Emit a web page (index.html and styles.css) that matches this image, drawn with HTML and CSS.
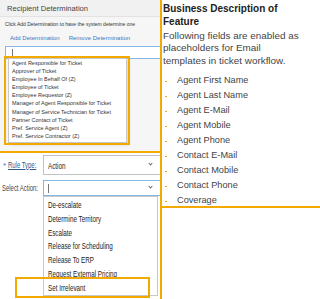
FILE: index.html
```html
<!DOCTYPE html>
<html lang="en">

<head>
  <meta charset="UTF-8" />
  <meta name="viewport" content="width=device-width, initial-scale=1.0" />
  <title>Recipient Determination</title>
  <link rel="stylesheet" href="styles.css">
</head>

<body>
  <div class="shots">
    <div class="shot-column">
      <div class="recipient-shot">
        <div class="panel-header">Recipient Determination</div>
        <p class="hint">Click Add Determination to have the system determine one</p>
        <div class="actions">
          <a href="#">Add Determination</a>
          <a href="#">Remove Determination</a>
        </div>
        <div class="text-input"><span class="caret"></span></div>
        <ul class="menu recipient-menu">
          <li>Agent Responsible for Ticket</li>
          <li>Approver of Ticket</li>
          <li>Employee In Behalf Of (Z)</li>
          <li>Employee of Ticket</li>
          <li>Employee Requestor (Z)</li>
          <li>Manager of Agent Responsible for Ticket</li>
          <li>Manager of Service Technician for Ticket</li>
          <li>Partner Contact of Ticket</li>
          <li>Pref. Service Agent (Z)</li>
          <li>Pref. Service Contractor (Z)</li>
        </ul>
        <div class="highlight recipient-highlight"></div>
      </div>

      <div class="rule-shot">
        <div class="field-row">
          <label class="field-label required"><span class="star">*</span><span class="narrow link-label">Rule Type:</span></label>
          <div class="select-box"><span class="narrow">Action</span><span class="chevron"></span></div>
        </div>
        <div class="field-row">
          <label class="field-label"><span class="narrow">Select Action:</span></label>
          <div class="select-box focused"><span class="caret tall"></span><span class="chevron"></span></div>
        </div>
        <ul class="menu action-menu">
          <li><span class="narrow">De-escalate</span></li>
          <li><span class="narrow">Determine Territory</span></li>
          <li><span class="narrow">Escalate</span></li>
          <li><span class="narrow">Release for Scheduling</span></li>
          <li><span class="narrow">Release To ERP</span></li>
          <li><span class="narrow">Request External Pricing</span></li>
          <li><span class="narrow">Set Irrelevant</span></li>
        </ul>
        <div class="highlight action-highlight"></div>
      </div>
    </div>

    <div class="description">
      <div class="description-body">
        <h2>Business Description of Feature</h2>
        <p>Following fields are enabled as<br>placeholders for Email<br>templates in ticket workflow.</p>
        <ul>
          <li>Agent First Name</li>
          <li>Agent Last Name</li>
          <li>Agent E-Mail</li>
          <li>Agent Mobile</li>
          <li>Agent Phone</li>
          <li>Contact E-Mail</li>
          <li>Contact Mobile</li>
          <li>Contact Phone</li>
          <li>Coverage</li>
        </ul>
      </div>
    </div>
  </div>
</body>

</html>
```

FILE: styles.css
```css
* {
  box-sizing: border-box;
}

body {
  margin: 0;
  font-family: 'Liberation Sans', Arial, sans-serif;
  color: #333;
  background: #fff;
}

.shots {
  display: flex;
  width: 320px;
  height: 299px;
  overflow: hidden;
}

.shot-column {
  width: 160px;
  display: flex;
  flex-direction: column;
}

/* top screenshot: recipient determination */
.recipient-shot {
  position: relative;
  height: 153px;
  background: #f6f6f6;
  border-bottom: 2px solid #f2a900;
  overflow: hidden;
}

.panel-header {
  height: 17px;
  padding: 4px 0 0 7px;
  font-size: 7.6px;
  color: #444;
  background: #f1f1f1;
  border-bottom: 1px solid #e2e2e2;
}

.hint {
  margin: 4px 0 0 5px;
  font-size: 5px;
  white-space: nowrap;
  color: #333;
}

.actions {
  display: flex;
  gap: 9px;
  margin: 8px 0 0 10px;
  font-size: 6px;
}

.actions a {
  color: #3b78c2;
  text-decoration: none;
}

.text-input {
  height: 13px;
  margin: 5px -10px 0 5px;
  background: #fff;
  border: 1px solid #86b6e6;
  padding: 2px 0 0 6px;
}

.caret {
  display: block;
  width: 1px;
  height: 7px;
  background: #777;
}

.menu {
  list-style: none;
  margin: 0;
  padding: 0;
  background: #fff;
  border: 1px solid #c8c8c8;
}

.recipient-menu {
  position: absolute;
  left: 8px;
  top: 58px;
  width: 119px;
  padding: 0 0 2px 3px;
  font-size: 5.5px;
  line-height: 8.1px;
  white-space: nowrap;
  box-shadow: 2px 2px 3px rgba(0, 0, 0, 0.12);
}

.highlight {
  position: absolute;
  border: 2px solid #f2a900;
}

.recipient-highlight {
  left: 4px;
  top: 56px;
  width: 126px;
  height: 89px;
}

/* bottom screenshot: rule type / action */
.rule-shot {
  position: relative;
  flex: 1;
  padding-top: 2px;
  overflow: hidden;
}

.field-row {
  display: flex;
  align-items: center;
  margin-bottom: 5px;
}

.field-label {
  width: 43px;
  padding-left: 2px;
  font-size: 9px;
  color: #444;
  white-space: nowrap;
}

.field-label.required {
  padding-left: 3px;
}

.star {
  color: #2d6fc0;
  font-size: 8px;
  margin-right: 2px;
}

.link-label {
  color: #2e5a8e;
  text-decoration: underline;
}

.narrow {
  display: inline-block;
  transform: scaleX(0.66);
  transform-origin: left center;
  white-space: nowrap;
}

.select-box {
  position: relative;
  flex: 1;
  height: 20px;
  margin-right: -10px;
  padding: 4px 0 0 4px;
  font-size: 9.5px;
  color: #222;
  border: 1px solid #c2c2c2;
  background: #fff;
}

.select-box.focused {
  height: 16px;
  padding-top: 3px;
  border-color: #86b6e6;
}

.caret.tall {
  height: 9px;
}

.chevron {
  position: absolute;
  right: 17px;
  top: 50%;
  width: 3px;
  height: 3px;
  margin-top: -3px;
  border-right: 1px solid #666;
  border-bottom: 1px solid #666;
  transform: rotate(45deg);
}

.action-menu {
  margin-left: 43px;
  margin-top: -5px;
  width: 115px;
  padding: 1px 0 0 4px;
  font-size: 9.5px;
  line-height: 13.8px;
  color: #222;
}

.action-highlight {
  left: 15px;
  top: 124px;
  width: 135px;
  height: 21px;
}

/* right column: description */
.description {
  flex: 1;
  border-left: 2px solid #f2a900;
}

.description-body {
  height: 208px;
  padding: 2px 12px 0 1px;
  border-bottom: 2px solid #f2a900;
}

.description h2 {
  margin: 0;
  font-size: 10px;
  line-height: 13px;
  color: #222;
}

.description p {
  margin: 2px 0 0;
  font-size: 9.9px;
  line-height: 12.3px;
  color: #444;
  white-space: nowrap;
}

.description ul {
  list-style: none;
  margin: 6px 0 0;
  padding: 0;
}

.description li {
  position: relative;
  padding-left: 14px;
  font-size: 9.2px;
  line-height: 15px;
  color: #444;
}

.description li::before {
  content: '';
  position: absolute;
  left: 2px;
  top: 8px;
  width: 1.5px;
  height: 1.5px;
  background: #f2a900;
}
```
